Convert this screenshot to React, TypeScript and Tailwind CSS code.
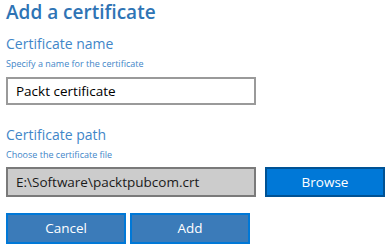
import React from "react";

export default function App() {
  return (
    <div
      className="w-[388px] h-[252px] bg-white pl-[6px] overflow-hidden"
      style={{ fontFamily: '"Open Sans", "Noto Sans", sans-serif' }}
    >
      <div className="text-[19px] leading-[24px] font-semibold text-[#2f74b5]">Add a certificate</div>
      <div className="mt-[10px] text-[14px] leading-[20px] text-[#3f86c8]">Certificate name</div>
      <div className="mt-[4px] text-[9px] leading-[12px] text-[#3f86c8]">Specify a name for the certificate</div>
      <div className="mt-[7px] w-[250px] h-[28px] border-2 border-[#9a9a9a] bg-white flex items-center pl-[8px] text-[13.5px] text-black">
        Packt certificate
      </div>
      <div className="mt-[20px] text-[14px] leading-[20px] text-[#3f86c8]">Certificate path</div>
      <div className="mt-[4px] text-[9px] leading-[12px] text-[#3f86c8]">Choose the certificate file</div>
      <div className="mt-[6px] flex gap-[9px]">
        <div className="w-[250px] h-[30px] border-2 border-[#7a7a7a] bg-[#cccccc] flex items-center pl-[8px] text-[13.5px] text-[#1a1a1a]">
          E:\Software\packtpubcom.crt
        </div>
        <div className="w-[120px] h-[30px] border-2 border-[#005294] bg-[#0078d7] flex items-center justify-center text-[13.5px] text-white">
          Browse
        </div>
      </div>
      <div className="mt-[16px] flex gap-[4px]">
        <div className="w-[120px] h-[31px] border-2 border-[#0078d7] bg-[#3b7bb9] flex items-center justify-center text-[13.5px] text-white">
          Cancel
        </div>
        <div className="w-[120px] h-[31px] border-2 border-[#0078d7] bg-[#3b7bb9] flex items-center justify-center text-[13.5px] text-white">
          Add
        </div>
      </div>
    </div>
  );
}
